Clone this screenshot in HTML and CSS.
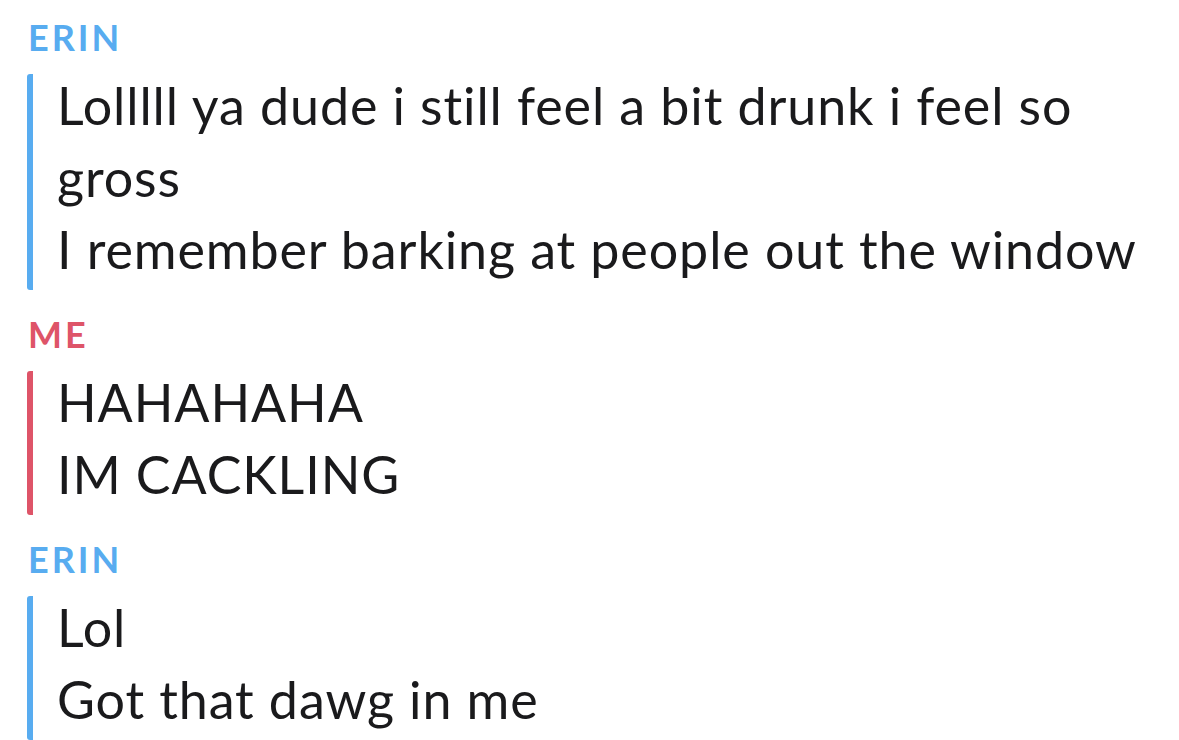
FILE: index.html
```html
<!DOCTYPE html>
<html>
<head>
<meta charset="utf-8">
<link rel="stylesheet" href="styles.css">
</head>
<body>
<div class="chat">
  <section class="group erin">
    <div class="name">ERIN</div>
    <div class="bubble">
      <div class="lines">
        <p>Lolllll ya dude i still feel a bit drunk i feel so gross</p>
        <p>I remember barking at people out the window</p>
      </div>
    </div>
  </section>
  <section class="group me">
    <div class="name">ME</div>
    <div class="bubble">
      <div class="lines">
        <p>HAHAHAHA</p>
        <p>IM CACKLING</p>
      </div>
    </div>
  </section>
  <section class="group erin">
    <div class="name">ERIN</div>
    <div class="bubble">
      <div class="lines">
        <p>Lol</p>
        <p>Got that dawg in me</p>
      </div>
    </div>
  </section>
</div>
</body>
</html>
```

FILE: styles.css
```css
html, body {
  margin: 0;
  padding: 0;
  background: #ffffff;
}

body {
  font-family: "Lato", "Noto Sans", sans-serif;
  color: #1a1a1c;
}

.chat {
  display: flex;
  flex-direction: column;
  gap: 24px;
  padding: 17px 0 0 27px;
}

.group {
  display: flex;
  flex-direction: column;
  gap: 17px;
}

.name {
  font-size: 36px;
  line-height: 40px;
  font-weight: 700;
  letter-spacing: 3px;
  padding-left: 1px;
}

.erin .name { color: #58acf0; }
.me .name { color: #de5468; }

.bubble {
  display: flex;
  border-left: 6px solid;
  border-radius: 3px;
}

.erin .bubble { border-color: #58acf0; }
.me .bubble { border-color: #de5468; }

.lines {
  width: 1084px;
  margin: -5px 0 5px 24px;
}

.lines p {
  margin: 0;
  font-size: 52px;
  line-height: 72px;
  font-weight: 400;
  letter-spacing: 0.9px;
}
```
